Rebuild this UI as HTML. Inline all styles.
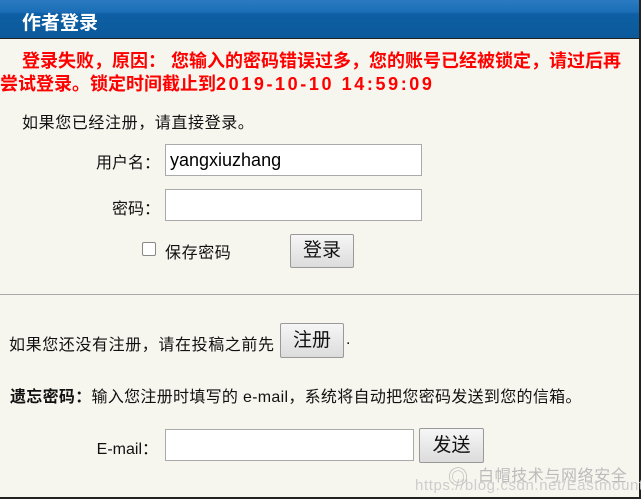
<!DOCTYPE html>
<html><head><meta charset="utf-8"><style>
body{margin:0;width:641px;height:500px;overflow:hidden;background:#fff;font-family:"Liberation Sans","Noto Sans CJK SC",sans-serif;}
.wrap{position:absolute;left:0;top:0;width:639px;height:497px;background:#f7f6ee;border-right:2px solid #222;border-bottom:2px solid #222;}
.hd{position:absolute;left:0;top:0;width:639px;height:38px;background:linear-gradient(#2a7bc0 0,#1b6fb6 12px,#0d5ea3 14px,#0c5a9c 38px);border-bottom:1px solid #222;}
.hd span{position:absolute;left:22px;top:8px;color:#fff;font-weight:bold;font-size:19px;}
.t{position:absolute;white-space:nowrap;color:#111;font-size:16px;letter-spacing:0.6px;}
.r{position:absolute;white-space:nowrap;color:#111;font-size:16px;text-align:right;width:160px;left:0;}
.red{color:#f00;font-weight:bold;font-size:18px;letter-spacing:0;}
.num{letter-spacing:2.6px;}
.inp{position:absolute;background:#fff;border:1px solid #aaa;box-sizing:border-box;font-size:18px;padding-left:4px;line-height:30px;color:#000;}
.btn{position:absolute;background:linear-gradient(#f6f6f6,#dcdcdc);border:1px solid #999;box-sizing:border-box;font-size:19px;text-align:center;color:#111;border-radius:2px;}
</style></head><body><div class="wrap">
<div class="hd"><span>作者登录</span></div>
<div class="t red" style="left:22px;top:47px">登录失败，原因： 您输入的密码错误过多，您的账号已经被锁定，请过后再</div>
<div class="t red" style="left:0;top:70px">尝试登录。锁定时间截止到<span class="num">2019-10-10 14:59:09</span></div>
<div class="t" style="left:22px;top:109px">如果您已经注册，请直接登录。</div>
<div class="r" style="top:149px">用户名：</div>
<div class="inp" style="left:165px;top:144px;width:257px;height:32px">yangxiuzhang</div>
<div class="r" style="top:195px">密码：</div>
<div class="inp" style="left:165px;top:189px;width:257px;height:32px"></div>
<div style="position:absolute;left:142px;top:242px;width:14px;height:14px;border:1px solid #888;background:#fff;box-sizing:border-box;border-radius:2px"></div>
<div class="t" style="left:165px;top:239px">保存密码</div>
<div class="btn" style="left:290px;top:234px;width:64px;height:34px;line-height:32px">登录</div>
<div style="position:absolute;left:0;top:294px;width:639px;height:1px;background:#aaa"></div>
<div class="t" style="left:9px;top:331px">如果您还没有注册，请在投稿之前先</div>
<div class="btn" style="left:280px;top:323px;width:64px;height:35px;line-height:33px">注册</div>
<div class="t" style="left:346px;top:331px">.</div>
<div class="t" style="left:10px;top:383px;letter-spacing:0.3px"><b>遗忘密码：</b>输入您注册时填写的 e-mail，系统将自动把您密码发送到您的信箱。</div>
<div class="r" style="top:435px;width:158px">E-mail：</div>
<div class="inp" style="left:165px;top:429px;width:249px;height:32px"></div>
<div class="btn" style="left:419px;top:428px;width:65px;height:35px;line-height:33px">发送</div>
<div class="t" style="left:478px;top:462px;color:#bbb;font-size:16px">白帽技术与网络安全</div>
<div class="t" style="left:415px;top:477px;color:#ccc;font-size:15px">https://blog.csdn.net/Eastmount</div>
<div class="t" style="left:448px;top:461px;color:#bbb;font-size:20px">◎</div>
</div></body></html>
